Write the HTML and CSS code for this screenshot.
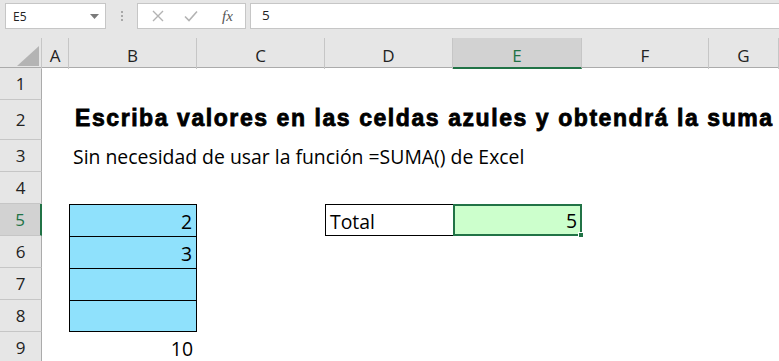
FILE: index.html
```html
<!DOCTYPE html>
<html lang="es">
<head>
  <meta charset="UTF-8" />
  <meta name="viewport" content="width=device-width, initial-scale=1.0" />
  <title>Suma sin función</title>
  <link rel="stylesheet" href="styles.css">
</head>
<body>

  <div class="toolbar">
    <div class="namebox">
      <span>E5</span>
      <svg class="drop" width="9" height="5" viewBox="0 0 9 5"><path d="M0 0h9L4.5 5z" fill="#7a7a7a"/></svg>
    </div>
    <div class="grip"><i></i><i></i><i></i></div>
    <div class="fx-buttons">
      <svg width="14" height="14" viewBox="0 0 14 14"><path d="M2 2l10 10M12 2L2 12" stroke="#b3b3b3" stroke-width="1.4" fill="none"/></svg>
      <svg width="16" height="14" viewBox="0 0 16 14"><path d="M2 7.5l4 4L14 2.5" stroke="#b3b3b3" stroke-width="1.6" fill="none"/></svg>
      <span class="fx">fx</span>
    </div>
    <div class="formula">5</div>
  </div>

  <div class="sheet">
    <div class="row head">
      <div class="corner"><span class="tri"></span></div>
      <div class="ch">A</div>
      <div class="ch">B</div>
      <div class="ch">C</div>
      <div class="ch">D</div>
      <div class="ch active">E</div>
      <div class="ch">F</div>
      <div class="ch">G</div>
    </div>

    <div class="row"><div class="rh">1</div></div>

    <div class="row tall">
      <div class="rh">2</div>
      <div class="cell col-b title">Escriba valores en las celdas azules y obtendrá la suma</div>
    </div>

    <div class="row">
      <div class="rh">3</div>
      <div class="cell col-b">Sin necesidad de usar la función =SUMA() de Excel</div>
    </div>

    <div class="row"><div class="rh">4</div></div>

    <div class="row">
      <div class="rh active">5</div>
      <div class="cell col-b input num">2</div>
      <div class="cell col-d boxed">Total</div>
      <div class="cell col-e result num">5<span class="handle"></span></div>
    </div>

    <div class="row">
      <div class="rh">6</div>
      <div class="cell col-b input num">3</div>
    </div>

    <div class="row">
      <div class="rh">7</div>
      <div class="cell col-b input"></div>
    </div>

    <div class="row">
      <div class="rh">8</div>
      <div class="cell col-b input last"></div>
    </div>

    <div class="row">
      <div class="rh">9</div>
      <div class="cell col-b num">10</div>
    </div>
  </div>

</body>
</html>
```

FILE: styles.css
```css
* {
  box-sizing: border-box;
}

body {
  margin: 0;
  width: 779px;
  height: 361px;
  overflow: hidden;
  background: #fff;
  font-family: 'Open Sans', 'Noto Sans', sans-serif;
  color: #000;
}

/* formula bar */
.toolbar {
  height: 38px;
  background: #e6e6e6;
  display: flex;
  align-items: flex-start;
  padding: 3px 0 0 5px;
}

.namebox {
  width: 101px;
  height: 26px;
  background: #fff;
  border: 1px solid #c6c6c6;
  display: flex;
  align-items: center;
  justify-content: space-between;
  padding: 0 6px 0 7px;
  font-size: 12px;
  color: #222;
}

.grip {
  width: 31px;
  height: 26px;
  display: flex;
  flex-direction: column;
  align-items: center;
  justify-content: center;
  gap: 2px;
}

.grip i {
  width: 2px;
  height: 2px;
  background: #a8a8a8;
}

.fx-buttons {
  width: 109px;
  height: 26px;
  background: #fff;
  border: 1px solid #c6c6c6;
  display: flex;
  align-items: center;
  gap: 18px;
  padding: 0 0 0 13px;
}

.fx-buttons .fx {
  margin-left: 5px;
  font-family: 'Liberation Serif', serif;
  font-style: italic;
  font-size: 15px;
  color: #555;
}

.formula {
  flex: 1;
  height: 26px;
  margin-left: 4px;
  background: #fff;
  border: 1px solid #c6c6c6;
  border-right: none;
  padding: 2px 0 0 11px;
  font-size: 13.5px;
  color: #222;
}

/* worksheet */
.row {
  display: grid;
  grid-template-columns: 42px 27px 128px 128px 128px 129px 127px 1fr;
  height: 32px;
}

.row.tall {
  height: 40px;
}

.row.head {
  height: 30px;
  background: #e6e6e6;
  border-bottom: 1px solid #ababab;
}

.corner {
  position: relative;
  border-right: 1px solid #c6c6c6;
}

.corner .tri {
  position: absolute;
  right: 2px;
  bottom: 3px;
  width: 0;
  height: 0;
  border-left: 22px solid transparent;
  border-bottom: 20px solid #b4b4b4;
}

.ch {
  display: flex;
  align-items: center;
  justify-content: center;
  padding-top: 4px;
  font-size: 17px;
  color: #222;
  border-right: 1px solid #c6c6c6;
}

.ch.active {
  background: #d2d2d2;
  color: #217346;
  border-bottom: 2px solid #217346;
  padding-top: 6px;
}

.rh {
  grid-column: 1;
  background: #e6e6e6;
  border-right: 1px solid #ababab;
  border-bottom: 1px solid #c6c6c6;
  display: flex;
  align-items: center;
  justify-content: center;
  font-size: 17px;
  color: #222;
}

.rh.active {
  background: #d2d2d2;
  color: #217346;
  border-right: 2px solid #217346;
}

.cell {
  grid-row: 1;
  display: flex;
  align-items: flex-end;
  padding: 0 4px 2px 4px;
  font-size: 19.4px;
  white-space: nowrap;
}

.col-b { grid-column: 3; }
.col-d { grid-column: 5; }
.col-e { grid-column: 6; }

.title {
  padding: 0 0 8px 6px;
  font-family: 'Liberation Sans', Arial, sans-serif;
  font-weight: bold;
  font-size: 23px;
  letter-spacing: 1.57px;
  -webkit-text-stroke: 0.8px #000;
}

.num {
  justify-content: flex-end;
}

.input {
  background: #8fe1fc;
  border: 1px solid #000;
  border-bottom: none;
  padding-bottom: 1px;
}

.input.last {
  border-bottom: 1px solid #000;
}

.boxed {
  border: 1px solid #000;
  border-right: none;
  padding-bottom: 0;
}

.result {
  position: relative;
  background: #ccffcc;
  border: 2px solid #217346;
  padding: 0 3px 0 0;
}

.result .handle {
  position: absolute;
  right: -4px;
  bottom: -4px;
  width: 6px;
  height: 6px;
  background: #217346;
  border: 1px solid #fff;
}
```
